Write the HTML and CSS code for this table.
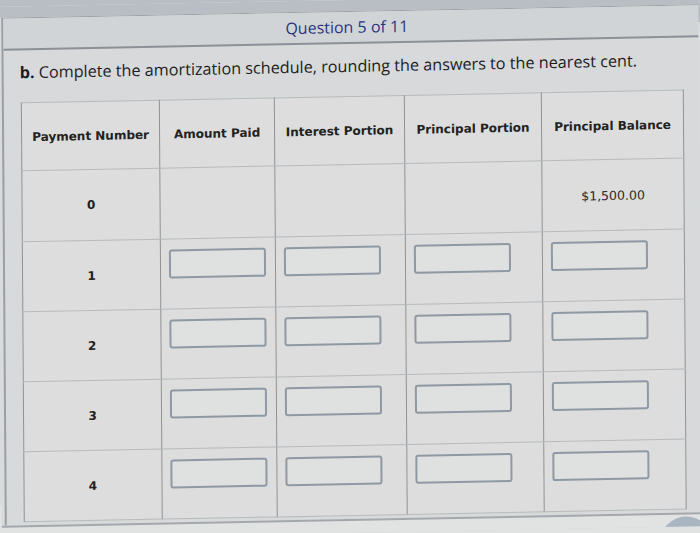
FILE: index.html
```html
<!DOCTYPE html>
<html lang="en">
<head>
<meta charset="utf-8">
<title>Question 5 of 11</title>
<link rel="stylesheet" href="styles.css">
</head>
<body>
<div class="screen">
  <div class="topbar"></div>
  <div class="panel">
    <div class="qhead">Question 5 of 11</div>
    <div class="content">
      <p class="prompt"><b>b.</b> Complete the amortization schedule, rounding the answers to the nearest cent.</p>
      <table class="sched">
        <colgroup>
          <col class="c1"><col class="c2"><col class="c3"><col class="c4"><col class="c5">
        </colgroup>
        <thead>
          <tr>
            <th>Payment Number</th>
            <th>Amount Paid</th>
            <th>Interest Portion</th>
            <th>Principal Portion</th>
            <th>Principal Balance</th>
          </tr>
        </thead>
        <tbody>
          <tr class="r0">
            <td class="num">0</td>
            <td></td>
            <td></td>
            <td></td>
            <td class="val">$1,500.00</td>
          </tr>
          <tr>
            <td class="num">1</td>
            <td class="in"><input type="text" aria-label="Amount Paid 1"></td>
            <td class="in"><input type="text" aria-label="Interest Portion 1"></td>
            <td class="in"><input type="text" aria-label="Principal Portion 1"></td>
            <td class="in"><input type="text" aria-label="Principal Balance 1"></td>
          </tr>
          <tr>
            <td class="num">2</td>
            <td class="in"><input type="text" aria-label="Amount Paid 2"></td>
            <td class="in"><input type="text" aria-label="Interest Portion 2"></td>
            <td class="in"><input type="text" aria-label="Principal Portion 2"></td>
            <td class="in"><input type="text" aria-label="Principal Balance 2"></td>
          </tr>
          <tr>
            <td class="num">3</td>
            <td class="in"><input type="text" aria-label="Amount Paid 3"></td>
            <td class="in"><input type="text" aria-label="Interest Portion 3"></td>
            <td class="in"><input type="text" aria-label="Principal Portion 3"></td>
            <td class="in"><input type="text" aria-label="Principal Balance 3"></td>
          </tr>
          <tr>
            <td class="num">4</td>
            <td class="in"><input type="text" aria-label="Amount Paid 4"></td>
            <td class="in"><input type="text" aria-label="Interest Portion 4"></td>
            <td class="in"><input type="text" aria-label="Principal Portion 4"></td>
            <td class="in"><input type="text" aria-label="Principal Balance 4"></td>
          </tr>
        </tbody>
      </table>
    </div>
  </div>
  <div class="footer">
    <span class="fab-left"></span>
    <span class="fab-right"></span>
  </div>
</div>
</body>
</html>
```

FILE: styles.css
```css
html, body {
  margin: 0;
  padding: 0;
}
body {
  width: 700px;
  height: 533px;
  overflow: hidden;
  background: linear-gradient(#b9bdc4 0 22px, #d8dadb 22px 505px, #e1e2e2 505px);
}
.screen {
  width: 700px;
  height: 533px;
  overflow: hidden;
  background: #d8dadb;
  display: flex;
  flex-direction: column;
  transform-origin: 350px 266px;
  transform: rotate(-0.4deg) skewY(-0.7deg);
}
.topbar {
  flex: none;
  height: 11px;
  background: #b9bdc4;
}
.panel {
  flex: none;
  margin-left: 3px;
  border-left: 2px solid #9a9fa5;
  border-top: 1px solid #9ea3a9;
  background: #d7d9da;
  padding-bottom: 3px;
}
.qhead {
  height: 30px;
  border-bottom: 2px solid #8c9197;
  background: #d1d4d7;
  display: flex;
  align-items: center;
  justify-content: center;
  padding-right: 8px;
  font-family: "Open Sans", "Liberation Sans", sans-serif;
  font-size: 16px;
  color: #2a3480;
}
.content {
  padding: 11px 0 0 16px;
}
.prompt {
  margin: 0;
  font-family: "Open Sans", "Liberation Sans", sans-serif;
  font-size: 16.2px;
  line-height: 22px;
  color: #1c1c1e;
}
.prompt b {
  font-weight: 700;
}
.sched {
  margin-top: 19px;
  margin-left: 1px;
  width: 662px;
  table-layout: fixed;
  border-collapse: collapse;
  font-family: "DejaVu Sans", Verdana, sans-serif;
  color: #222;
  background: #dcdddc;
  border: 1px solid #8e9295;
}
.c1 { width: 138px; }
.c2 { width: 115px; }
.c3 { width: 130px; }
.c4 { width: 137px; }
.c5 { width: 142px; }
.sched th,
.sched td {
  border-left: 1px solid #8f9396;
  border-right: 1px solid #8f9396;
  border-top: 1px solid #b7bbbe;
  border-bottom: 1px solid #b7bbbe;
  padding: 0;
}
.sched th {
  height: 67px;
  font-size: 12px;
  font-weight: 700;
  text-align: center;
  vertical-align: middle;
  white-space: nowrap;
}
.sched tr.r0 td {
  height: 70px;
}
.sched td {
  height: 69px;
  vertical-align: middle;
}
.sched td.num {
  text-align: center;
  font-size: 12px;
  font-weight: 700;
}
.sched td.val {
  text-align: center;
  font-size: 12.5px;
  color: #2a2a2a;
}
.sched td.in {
  height: 59px;
  vertical-align: top;
  padding: 10px 0 0 8px;
}
.sched input {
  display: block;
  box-sizing: border-box;
  width: 97px;
  height: 29px;
  margin: 0;
  padding: 0 4px;
  border: 2px solid #8f99a4;
  border-radius: 3px;
  background: #dfe0e0;
  outline: none;
}
.footer {
  flex: 1;
  position: relative;
  border-top: 2px solid #a3a8ad;
  background: #e1e2e2;
}
.fab-left {
  position: absolute;
  left: 22px;
  top: 7px;
  width: 26px;
  height: 14px;
  border-radius: 50%;
  background: #cfd1d3;
}
.fab-right {
  position: absolute;
  left: 658px;
  top: 2px;
  width: 52px;
  height: 52px;
  border-radius: 50%;
  background: #a9b5c0;
}
```
